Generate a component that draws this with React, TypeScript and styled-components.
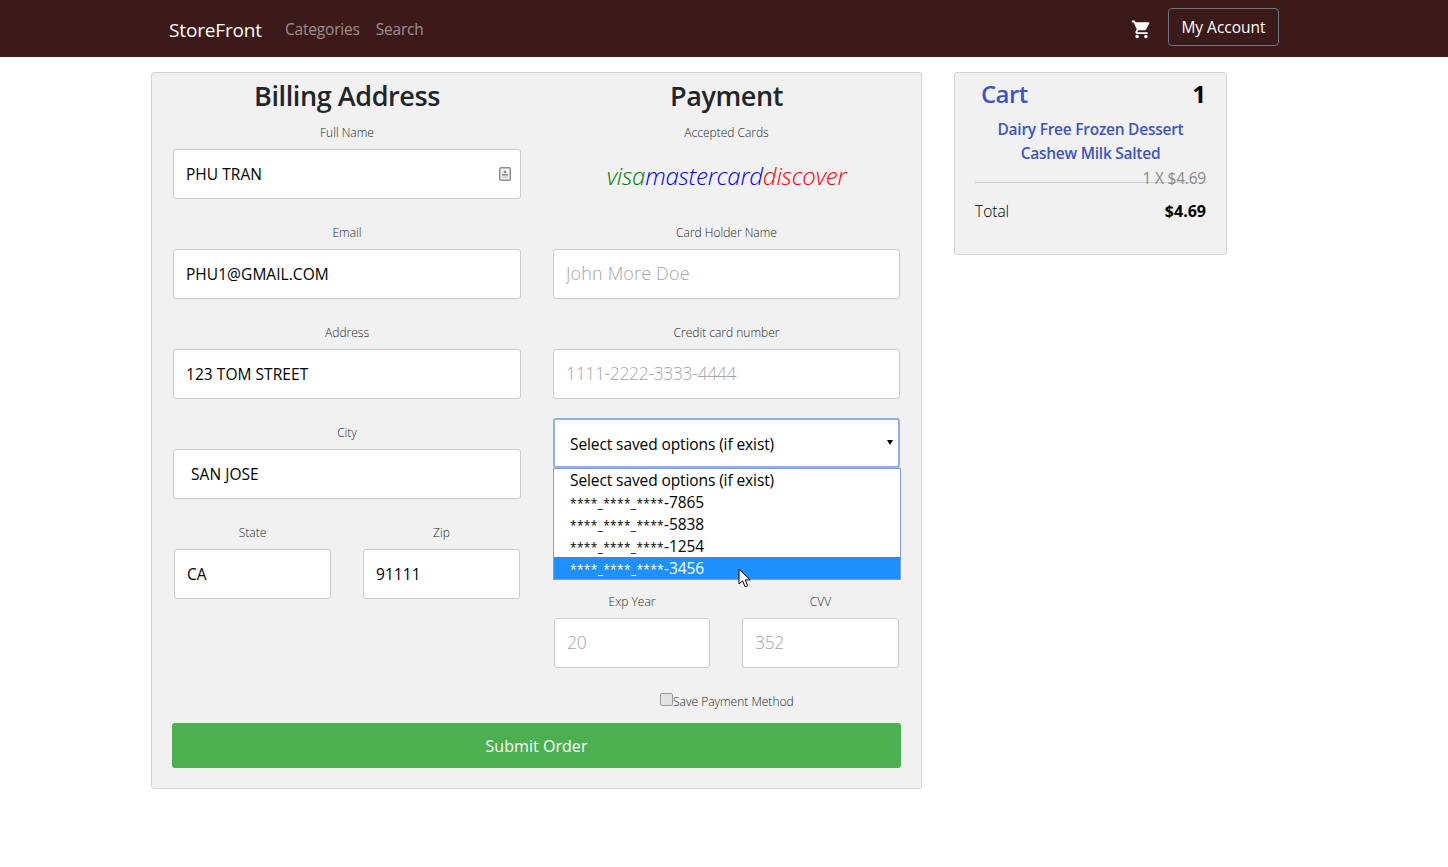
import { ReactElement } from 'react'
import styled, { createGlobalStyle } from 'styled-components'

const FONT = '"Open Sans", "Noto Sans", sans-serif'
const CARD_MASK = '****_****_****'

function App(): ReactElement {
  return (
    <>
      <GlobalStyle />
      <NavBar>
        <Brand>StoreFront</Brand>
        <NavLink>Categories</NavLink>
        <NavLink>Search</NavLink>
        <NavRight>
          <CartIcon viewBox="0 0 24 24" fill="#fff">
            <path d="M7 18c-1.1 0-1.99.9-1.99 2S5.9 22 7 22s2-.9 2-2-.9-2-2-2zM1 2v2h2l3.6 7.59-1.35 2.45c-.16.28-.25.61-.25.96 0 1.1.9 2 2 2h12v-2H7.42c-.14 0-.25-.11-.25-.25l.03-.12.9-1.83h7.45c.75 0 1.41-.41 1.75-1.03l3.58-6.49c.08-.14.12-.31.12-.48 0-.55-.45-1-1-1H5.21l-.94-2H1zm16 16c-1.1 0-1.99.9-1.99 2s.89 2 1.99 2 2-.9 2-2-.9-2-2-2z" />
          </CartIcon>
          <AccountButton>My Account</AccountButton>
        </NavRight>
      </NavBar>
      <Main>
        <CheckoutCard>
          <Columns>
            <Column>
              <Heading>Billing Address</Heading>
              <Field>
                <Label>Full Name</Label>
                <InputWrap>
                  <TextInput defaultValue="PHU TRAN" />
                  <ContactIcon viewBox="0 0 12 14">
                    <rect x="0.75" y="0.75" width="10.5" height="12.5" rx="1" fill="#f4f4f4" stroke="#8f8f8f" strokeWidth="1.5" />
                    <circle cx="6" cy="5" r="1.4" fill="#8f8f8f" />
                    <rect x="3" y="7" width="6" height="1.6" fill="#8f8f8f" />
                    <rect x="3" y="9.5" width="6" height="1.4" fill="#c4c4c4" />
                  </ContactIcon>
                </InputWrap>
              </Field>
              <Field>
                <Label>Email</Label>
                <TextInput defaultValue="PHU1@GMAIL.COM" />
              </Field>
              <Field>
                <Label>Address</Label>
                <TextInput defaultValue="123 TOM STREET" />
              </Field>
              <Field>
                <Label>City</Label>
                <TextInput $inset={17} defaultValue="SAN JOSE" />
              </Field>
              <HalfRow $left={157}>
                <Field>
                  <Label>State</Label>
                  <TextInput defaultValue="CA" />
                </Field>
                <Field>
                  <Label>Zip</Label>
                  <TextInput defaultValue="91111" />
                </Field>
              </HalfRow>
            </Column>
            <Column>
              <Heading>Payment</Heading>
              <Field>
                <Label>Accepted Cards</Label>
                <CardBrands>
                  <CardBrand $color="#008000">visa</CardBrand>
                  <CardBrand $color="#0000ff">mastercard</CardBrand>
                  <CardBrand $color="#ff0000">discover</CardBrand>
                </CardBrands>
              </Field>
              <Field>
                <Label>Card Holder Name</Label>
                <TextInput placeholder="John More Doe" />
              </Field>
              <Field $gap={19}>
                <Label>Credit card number</Label>
                <TextInput $numeric placeholder="1111-2222-3333-4444" />
              </Field>
              <SelectWrap>
                <SelectBox>
                  Select saved options (if exist)
                  <SelectArrow />
                </SelectBox>
                <OptionList>
                  <Option>Select saved options (if exist)</Option>
                  {['7865', '5838', '1254', '3456'].map((last, i) => (
                    <Option key={last} $active={i === 3}>
                      <Mask>{CARD_MASK}</Mask>-{last}
                    </Option>
                  ))}
                </OptionList>
                <Pointer viewBox="0 0 13 20">
                  <path d="M1 1v15l3.6-3.2 2.5 6 2.6-1.1-2.5-5.8h5z" fill="#fff" stroke="#000" strokeWidth="1" />
                </Pointer>
              </SelectWrap>
              <HalfRow $left={156}>
                <Field>
                  <Label>Exp Year</Label>
                  <TextInput $numeric placeholder="20" />
                </Field>
                <Field>
                  <Label>CVV</Label>
                  <TextInput $numeric placeholder="352" />
                </Field>
              </HalfRow>
            </Column>
          </Columns>
          <SaveRow>
            <SaveCheck type="checkbox" />
            <SaveLabel>Save Payment Method</SaveLabel>
          </SaveRow>
          <SubmitButton>Submit Order</SubmitButton>
        </CheckoutCard>
        <CartCard>
          <CartHeader>
            <CartTitle>Cart</CartTitle>
            <CartCount>1</CartCount>
          </CartHeader>
          <CartItem>
            Dairy Free Frozen Dessert
            <br />
            Cashew Milk Salted
          </CartItem>
          <PriceRow>
            <PriceLine />
            <Price>1 X $4.69</Price>
          </PriceRow>
          <TotalRow>
            <span>Total</span>
            <TotalValue>$4.69</TotalValue>
          </TotalRow>
        </CartCard>
      </Main>
    </>
  )
}

export default App

const GlobalStyle = createGlobalStyle`
  * {
    box-sizing: border-box;
  }

  body {
    margin: 0;
    background: #fff;
    color: #212529;
    font-family: ${FONT};
    font-size: 16px;
  }
`

const NavBar = styled.nav`
  display: flex;
  align-items: center;
  height: 57px;
  padding: 0 169px;
  background: #3c1a1a;
`

const Brand = styled.span`
  margin: 2px 23px 0 0;
  color: #fff;
  font-size: 19px;
  letter-spacing: -0.15px;
`

const NavLink = styled.span`
  margin: 1px 16px 0 0;
  color: rgba(255, 255, 255, 0.5);
  font-size: 15.5px;
  letter-spacing: -0.2px;
`

const NavRight = styled.div`
  display: flex;
  align-items: center;
  margin-left: auto;
`

const CartIcon = styled.svg`
  width: 21px;
  height: 21px;
  margin: 2px 16px 0 0;
`

const AccountButton = styled.button`
  width: 111px;
  height: 38px;
  margin-bottom: 3px;
  padding: 0;
  border: 1px solid #6c757d;
  border-radius: 4px;
  background: transparent;
  color: #fff;
  font-family: ${FONT};
  font-size: 15.5px;
`

const Main = styled.main`
  display: flex;
  align-items: flex-start;
  gap: 32px;
  padding: 15px 0 0 151px;
`

const CheckoutCard = styled.section`
  width: 771px;
  height: 717px;
  padding: 0 20px;
  border: 1px solid #d4d4d4;
  border-radius: 3px;
  background: #f1f1f1;
`

const Columns = styled.div`
  display: grid;
  grid-template-columns: 348px 347px;
  gap: 32px;
  height: 620px;
  padding: 0 1px;
`

const Column = styled.div`
  display: flex;
  flex-direction: column;
`

const Heading = styled.h2`
  height: 50px;
  margin: 0;
  color: #212529;
  font-size: 27px;
  font-weight: 600;
  line-height: 45px;
  letter-spacing: -0.4px;
  text-align: center;
`

const Field = styled.div<{ $gap?: number }>`
  display: flex;
  flex-direction: column;
  min-width: 0;
  margin-bottom: ${(p) => p.$gap ?? 24}px;
`

const Label = styled.label`
  height: 18px;
  margin-bottom: 8px;
  color: #212529;
  font-size: 12px;
  font-weight: 300;
  line-height: 20px;
  text-align: center;
`

const InputWrap = styled.div`
  position: relative;
`

const TextInput = styled.input<{ $inset?: number; $numeric?: boolean }>`
  width: 100%;
  height: 50px;
  padding: 0 12px 0 ${(p) => p.$inset ?? 12}px;
  border: 1px solid #ccc;
  border-radius: 3px;
  background: #fff;
  color: #000;
  font-family: ${FONT};
  font-size: 15.5px;
  letter-spacing: 0.05px;

  &::placeholder {
    color: #a5a5a5;
    font-size: ${(p) => (p.$numeric ? 17.5 : 18)}px;
    font-weight: 300;
    letter-spacing: ${(p) => (p.$numeric ? -0.35 : 0.15)}px;
    opacity: 1;
  }
`

const ContactIcon = styled.svg`
  position: absolute;
  top: 18px;
  right: 10px;
  width: 12px;
  height: 14px;
`

const HalfRow = styled.div<{ $left: number }>`
  display: grid;
  grid-template-columns: ${(p) => p.$left}px 157px;
  gap: 32px;
  padding: 0 1px;
`

const CardBrands = styled.div`
  display: flex;
  align-items: center;
  justify-content: center;
  height: 50px;
  padding-top: 2px;
`

const CardBrand = styled.span<{ $color: string }>`
  color: ${(p) => p.$color};
  font-size: 24px;
  font-style: italic;
  font-weight: 300;
  letter-spacing: -0.2px;
`

const SelectWrap = styled.div`
  position: relative;
  margin-bottom: 124px;
`

const SelectBox = styled.div`
  display: flex;
  align-items: center;
  height: 50px;
  padding: 2px 0 0 15px;
  border: 2px solid #8fb0ec;
  border-radius: 3px;
  background: #fff;
  color: #000;
  font-size: 15.5px;
  letter-spacing: -0.1px;
`

const SelectArrow = styled.span`
  position: absolute;
  top: 22px;
  right: 7px;
  width: 0;
  height: 0;
  border-style: solid;
  border-width: 5px 3px 0;
  border-color: #000 transparent transparent;
`

const OptionList = styled.ul`
  position: absolute;
  top: 50px;
  left: 0;
  right: -1px;
  margin: 0;
  padding: 0;
  border: 1px solid #7f9fdc;
  background: #fff;
  list-style: none;
`

const Option = styled.li<{ $active?: boolean }>`
  height: 22px;
  padding-left: 16px;
  background: ${(p) => (p.$active ? '#1e90ff' : '#fff')};
  color: ${(p) => (p.$active ? '#fff' : '#000')};
  font-size: 15.5px;
  line-height: 22px;
  letter-spacing: -0.1px;
`

const Mask = styled.span`
  font-size: 12px;
  letter-spacing: 0.3px;
`

const Pointer = styled.svg`
  position: absolute;
  top: 150px;
  left: 185px;
  width: 13px;
  height: 20px;
`

const SaveRow = styled.div`
  display: flex;
  align-items: flex-start;
  height: 30px;
  padding-left: 488px;
`

const SaveCheck = styled.input`
  width: 13px;
  height: 13px;
  margin: 0;
  appearance: none;
  border: 1px solid #9a9a9a;
  border-radius: 2px;
  background: #e2e2e2;
`

const SaveLabel = styled.label`
  color: #212529;
  font-size: 12px;
  font-weight: 300;
  line-height: 17px;
`

const SubmitButton = styled.button`
  display: block;
  width: 729px;
  height: 45px;
  border: 0;
  border-radius: 3px;
  background: #4caf50;
  color: #fff;
  font-family: ${FONT};
  font-size: 16px;
  letter-spacing: 0.05px;
`

const CartCard = styled.aside`
  width: 273px;
  height: 183px;
  padding: 0 20px;
  border: 1px solid #d4d4d4;
  border-radius: 3px;
  background: #f1f1f1;
`

const CartHeader = styled.div`
  display: flex;
  align-items: center;
  justify-content: space-between;
  height: 44px;
  padding: 0 0 3px 6px;
`

const CartTitle = styled.span`
  color: #3d55c4;
  font-size: 24px;
  font-weight: 600;
  letter-spacing: -0.6px;
`

const CartCount = styled.span`
  color: #000;
  font-size: 24px;
  font-weight: 700;
`

const CartItem = styled.div`
  color: #3d55c4;
  font-size: 15.5px;
  font-weight: 600;
  line-height: 24px;
  letter-spacing: -0.25px;
  text-align: center;
`

const PriceRow = styled.div`
  position: relative;
  display: flex;
  justify-content: flex-end;
  height: 22px;
  margin-top: 2px;
`

const PriceLine = styled.div`
  position: absolute;
  top: 15px;
  left: 0;
  right: 0;
  height: 1px;
  background: #d0d0d0;
`

const Price = styled.span`
  position: relative;
  color: #888;
  font-size: 15.5px;
  line-height: 22px;
  letter-spacing: -0.2px;
`

const TotalRow = styled.div`
  display: flex;
  justify-content: space-between;
  margin-top: 11px;
  color: #000;
  font-size: 15.5px;
  font-weight: 300;
  line-height: 22px;
`

const TotalValue = styled.span`
  font-size: 16px;
  font-weight: 700;
`
